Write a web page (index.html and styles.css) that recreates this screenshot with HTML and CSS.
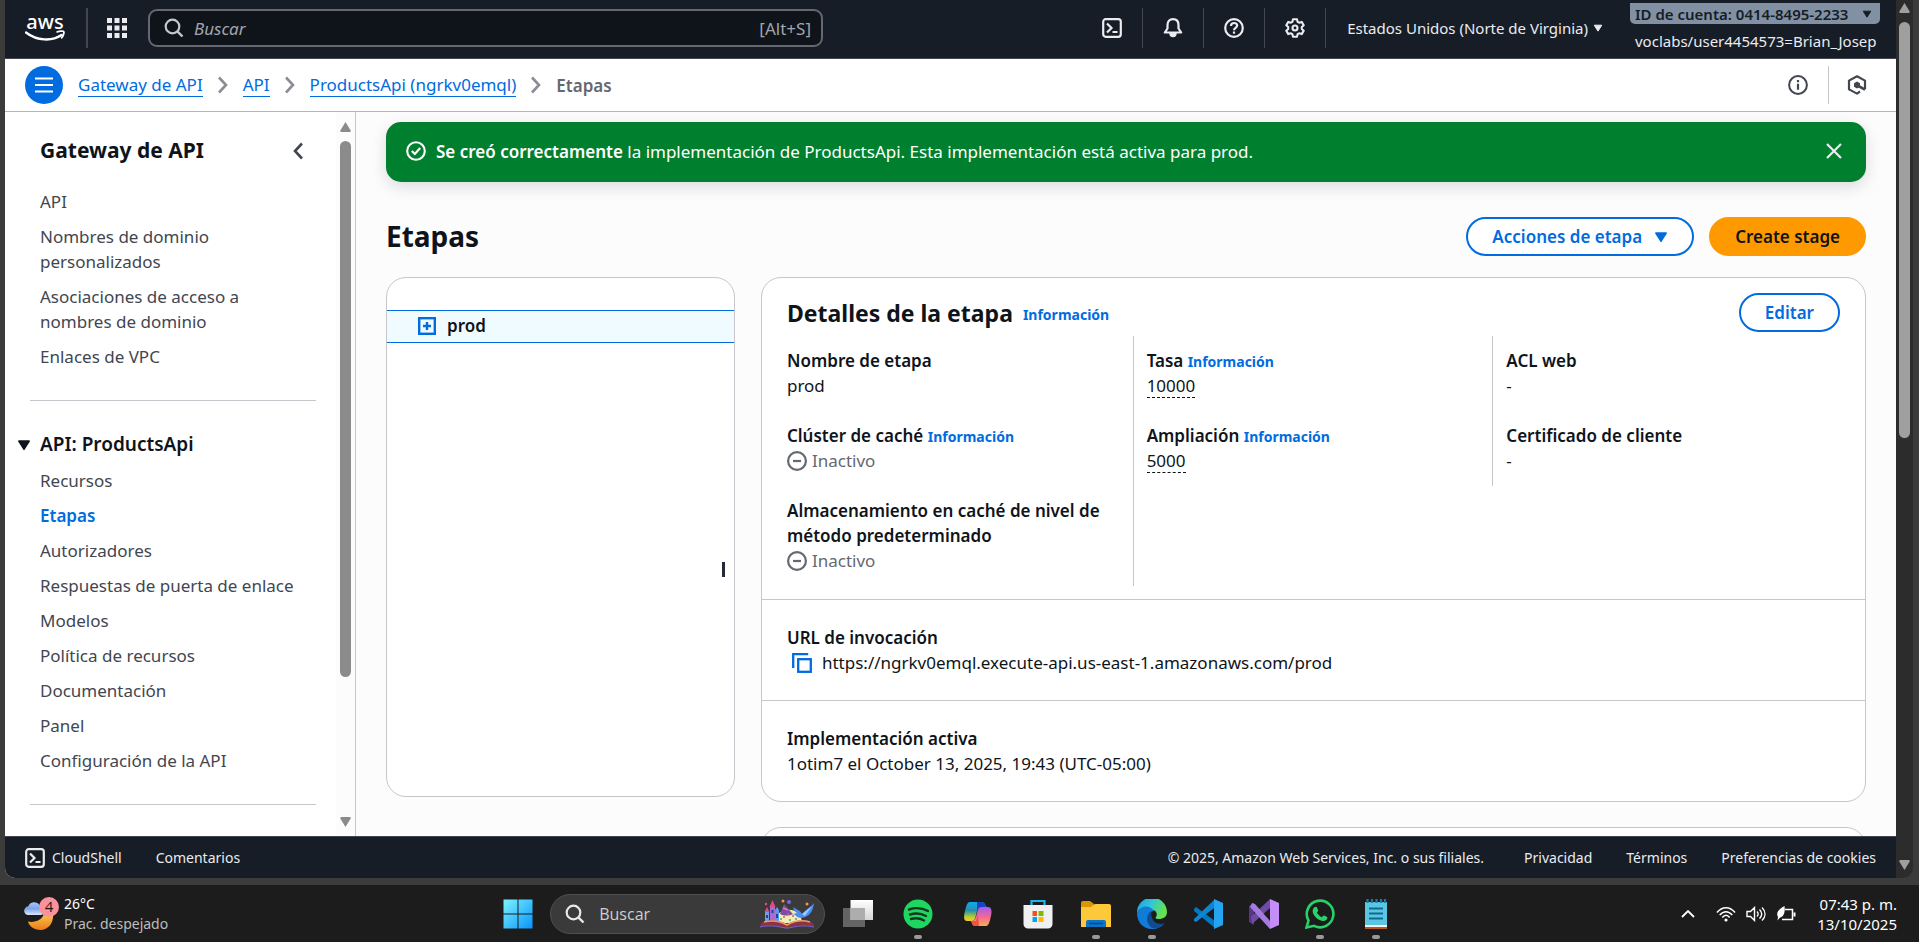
FILE: index.html
```html
<!DOCTYPE html>
<html lang="es">
<head>
<meta charset="utf-8">
<title>API Gateway - Etapas</title>
<meta name="viewport" content="width=device-width, initial-scale=1">
<link rel="stylesheet" href="styles.css">
</head>
<body>
<svg class="defs" aria-hidden="true">
  <symbol id="caret" viewBox="0 0 16 16"><path d="M2 3.5h12L8 13z" fill="currentColor" stroke="currentColor" stroke-width="1.6" stroke-linejoin="round"/></symbol>
  <symbol id="chev" viewBox="0 0 12 20"><path d="M2 2.5 9 10l-7 7.500" fill="none" stroke="currentColor" stroke-width="2.6"/></symbol>
  <symbol id="shell" viewBox="0 0 20 20"><rect x="1.200" y="1.200" width="17.600" height="17.600" rx="2.500" fill="none" stroke="currentColor" stroke-width="2.200"/><path d="M5 5.500 9.500 10 5 14.500M10.500 14h5" fill="none" stroke="currentColor" stroke-width="2.200"/></symbol>
  <symbol id="minus" viewBox="0 0 20 20"><circle cx="10" cy="10" r="8.900" fill="none" stroke="currentColor" stroke-width="2.200"/><path d="M6 10h8" stroke="currentColor" stroke-width="2.200"/></symbol>
  <symbol id="lens" viewBox="0 0 20 20"><circle cx="8.500" cy="8.500" r="6.800" fill="none" stroke="currentColor" stroke-width="2.200"/><path d="m13.300 13.300 5.200 5.200" stroke="currentColor" stroke-width="2.400"/></symbol>
</svg>
<div class="browser">
  <div class="page">
    <header class="topnav">
      <a class="aws" href="#" aria-label="aws"><svg viewBox="0 -9 40 46" width="40" height="46"><text x="20" y="15" text-anchor="middle" class="awstext">aws</text><path d="M1 18.500c11 8.500 26 9 35.500 2.500" fill="none" stroke="#fff" stroke-width="2.400" stroke-linecap="round"/><path d="M31.500 18.200c3-1.400 7-1.300 7.300-.6.400.8-.3 4.400-2.600 6.700" fill="none" stroke="#fff" stroke-width="1.800"/></svg></a>
      <span class="vbar"></span>
      <button class="grid9" aria-label="Servicios"><svg viewBox="0 0 20 20" width="20" height="20" fill="#ebebf0"><path d="M0 0h5v5H0zM7.500 0h5v5h-5zM15 0h5v5h-5zM0 7.500h5v5H0zM7.500 7.500h5v5h-5zM15 7.500h5v5h-5zM0 15h5v5H0zM7.500 15h5v5h-5zM15 15h5v5h-5z"/></svg></button>
      <label class="search"><svg width="20" height="20"><use href="#lens"/></svg><input type="text" placeholder="Buscar" aria-label="Buscar"><kbd>[Alt+S]</kbd></label>
      <div class="tools">
        <button aria-label="CloudShell"><svg width="20" height="20"><use href="#shell"/></svg></button>
        <button aria-label="Notificaciones"><svg viewBox="0 0 20 20" width="20" height="20" fill="none" stroke="currentColor" stroke-width="2.200"><path d="M10 1.200C6.500 1.200 4.500 3.600 4.500 7v3.500L1.800 14.500h16.400L15.500 10.500V7c0-3.400-2-5.800-5.500-5.800z" stroke-linejoin="round"/><path d="M7 15.500c0 4 6 4 6 0z" fill="currentColor" stroke-width="1.400"/></svg></button>
        <button aria-label="Ayuda"><svg viewBox="0 0 20 20" width="20" height="20" fill="none" stroke="currentColor" stroke-width="2.200"><circle cx="10" cy="10" r="8.800"/><path d="M7 8c0-4 6.200-3.800 6.200-.4 0 2.200-3.200 2.300-3.200 4.600"/><path d="M10 13.500v2.200"/></svg></button>
        <button aria-label="Configuración"><svg viewBox="0 0 20 20" width="20" height="20" fill="none" stroke="currentColor" stroke-width="2.100" stroke-linejoin="round"><path d="M8 1.200h4l.6 2.600 1.500.9 2.600-.8 2 3.400-1.900 1.800v1.800l1.900 1.800-2 3.400-2.600-.8-1.500.9-.6 2.600H8l-.6-2.600-1.500-.9-2.600.8-2-3.400 1.900-1.800V9.100L1.300 7.300l2-3.400 2.600.8 1.500-.9z"/><circle cx="10" cy="10" r="2.500"/></svg></button>
        <button class="region">Estados Unidos (Norte de Virginia)<svg width="10" height="10"><use href="#caret"/></svg></button>
        <div class="account">
          <button class="acctid">ID de cuenta: 0414-8495-2233<svg width="10" height="10"><use href="#caret"/></svg></button>
          <span>voclabs/user4454573=Brian_Josep</span>
        </div>
      </div>
    </header>
    <div class="crumbbar">
      <button class="burger" aria-label="Menú"><svg viewBox="0 0 18 16" width="18" height="16"><path d="M0 1.500h18M0 8h18M0 14.500h18" stroke="#fff" stroke-width="2.200"/></svg></button>
      <nav class="crumbs">
        <a href="#">Gateway de API</a><svg width="12" height="20"><use href="#chev"/></svg>
        <a href="#">API</a><svg width="12" height="20"><use href="#chev"/></svg>
        <a href="#">ProductsApi (ngrkv0emql)</a><svg width="12" height="20"><use href="#chev"/></svg>
        <strong>Etapas</strong>
      </nav>
      <div class="crumbtools">
        <button aria-label="Información"><svg viewBox="0 0 20 20" width="20" height="20" fill="none" stroke="currentColor" stroke-width="2"><circle cx="10" cy="10" r="8.900"/><path d="M10 8.800v6M10 5v2.200" stroke-width="2.200"/></svg></button>
        <button aria-label="Amazon Q"><svg viewBox="0 0 20 20" width="20" height="20" fill="none" stroke="currentColor" stroke-width="2.200"><path d="M13 16.500 10 18.600 2 14.400V5.600L10 1.300l8 4.300v8.600" stroke-linejoin="round"/><path d="M7 8.200 10 6.500l3 1.700v3.600l-3 1.700-3-1.700z" fill="currentColor" stroke="none"/><path d="m10.500 10.500 7.500 4.200" stroke-width="2.600"/></svg></button>
      </div>
    </div>
    <div class="workspace">
      <aside class="side">
        <div class="sidebody">
          <div class="sidehead"><h2>Gateway de API</h2><button aria-label="Cerrar"><svg class="flip" width="12" height="20"><use href="#chev"/></svg></button></div>
          <ul>
            <li><a href="#">API</a></li>
            <li><a href="#">Nombres de dominio personalizados</a></li>
            <li><a href="#">Asociaciones de acceso a nombres de dominio</a></li>
            <li><a href="#">Enlaces de VPC</a></li>
          </ul>
          <hr>
          <h3><svg width="14" height="14"><use href="#caret"/></svg>API: ProductsApi</h3>
          <ul>
            <li><a href="#">Recursos</a></li>
            <li><a class="on" href="#">Etapas</a></li>
            <li><a href="#">Autorizadores</a></li>
            <li><a href="#">Respuestas de puerta de enlace</a></li>
            <li><a href="#">Modelos</a></li>
            <li><a href="#">Política de recursos</a></li>
            <li><a href="#">Documentación</a></li>
            <li><a href="#">Panel</a></li>
            <li><a href="#">Configuración de la API</a></li>
          </ul>
          <hr>
        </div>
        <div class="scroll side-scroll"><i class="up"></i><i class="thumb"></i><i class="down"></i></div>
      </aside>
      <main class="main">
        <div class="flash" role="status">
          <svg viewBox="0 0 20 20" width="20" height="20" fill="none" stroke="#fff" stroke-width="2.100"><circle cx="10" cy="10" r="8.800"/><path d="m5.800 10 3 3 5.400-6"/></svg>
          <p><b>Se creó correctamente</b> la implementación de ProductsApi. Esta implementación está activa para prod.</p>
          <button aria-label="Cerrar"><svg viewBox="0 0 16 16" width="16" height="16"><path d="m1 1 14 14M15 1 1 15" stroke="#ebebf0" stroke-width="2.200"/></svg></button>
        </div>
        <div class="titlebar">
          <h1>Etapas</h1>
          <button class="btn">Acciones de etapa<svg width="14" height="14"><use href="#caret"/></svg></button>
          <button class="btn primary">Create stage</button>
        </div>
        <div class="columns">
          <section class="card tree">
            <div class="node"><button aria-label="Expandir"><svg viewBox="0 0 18 18" width="18" height="18" fill="none" stroke="#006ce0"><rect x="1.200" y="1.200" width="15.600" height="15.600" stroke-width="2.400"/><path d="M9 5v8M5 9h8" stroke-width="2.400"/></svg></button><b>prod</b></div>
            <i class="handle"></i>
          </section>
          <div class="stack">
            <section class="card details">
              <div class="cardhead"><h2>Detalles de la etapa</h2><a class="info" href="#">Información</a><button class="btn">Editar</button></div>
              <div class="kv">
                <dl>
                  <div><dt>Nombre de etapa</dt><dd>prod</dd></div>
                  <div><dt>Clúster de caché <a class="info" href="#">Información</a></dt><dd class="off"><svg width="20" height="20"><use href="#minus"/></svg>Inactivo</dd></div>
                  <div><dt>Almacenamiento en caché de nivel de método predeterminado</dt><dd class="off"><svg width="20" height="20"><use href="#minus"/></svg>Inactivo</dd></div>
                </dl>
                <dl>
                  <div><dt>Tasa <a class="info" href="#">Información</a></dt><dd><span class="hint">10000</span></dd></div>
                  <div><dt>Ampliación <a class="info" href="#">Información</a></dt><dd><span class="hint">5000</span></dd></div>
                </dl>
                <dl>
                  <div><dt>ACL web</dt><dd>-</dd></div>
                  <div><dt>Certificado de cliente</dt><dd>-</dd></div>
                </dl>
              </div>
              <dl class="strip"><dt>URL de invocación</dt><dd class="copy"><button aria-label="Copiar"><svg viewBox="0 0 20 20" width="20" height="20" fill="none" stroke="#006ce0" stroke-width="2.300"><path d="M1.200 15V1.200h15"/><rect x="6.200" y="6.200" width="12.600" height="12.600"/></svg></button>https://ngrkv0emql.execute-api.us-east-1.amazonaws.com/prod</dd></dl>
              <dl class="strip"><dt>Implementación activa</dt><dd>1otim7 el October 13, 2025, 19:43 (UTC-05:00)</dd></dl>
            </section>
            <section class="card next"></section>
          </div>
        </div>
      </main>
    </div>
    <footer class="foot">
      <a href="#"><svg width="20" height="20"><use href="#shell"/></svg>CloudShell</a>
      <a href="#">Comentarios</a>
      <span>© 2025, Amazon Web Services, Inc. o sus filiales.</span>
      <a href="#">Privacidad</a>
      <a href="#">Términos</a>
      <a href="#">Preferencias de cookies</a>
    </footer>
  </div>
  <div class="scroll page-scroll"><i class="up"></i><i class="thumb"></i><i class="down"></i></div>
</div>
<div class="taskbar">
  <button class="weather">
    <svg viewBox="0 0 36 36" width="36" height="36"><defs><linearGradient id="moon" x2="0" y2="1"><stop stop-color="#f8c64a"/><stop offset="1" stop-color="#ee7b18"/></linearGradient><linearGradient id="cloud" x2="0" y2="1"><stop stop-color="#a9c4f6"/><stop offset=".5" stop-color="#7fa3ea"/><stop offset="1" stop-color="#dce8fb"/></linearGradient></defs><path d="M29 18c1 9-5 16-12.500 16C10 34 5 30 4 25.500 11 27 18 24 20 18z" fill="url(#moon)"/><path d="M4.500 19a4.200 4.200 0 0 1-.3-8.400 6.500 6.500 0 0 1 11.500-1.500c3 0 5 2.500 5 5s-1.500 4.900-4 4.900z" fill="url(#cloud)"/><circle cx="25" cy="11" r="10" fill="#fb919b"/><text x="25" y="16" text-anchor="middle" class="badge">4</text></svg>
    <span>26°C<small>Prac. despejado</small></span>
  </button>
  <div class="apps">
    <button aria-label="Inicio" class="start"><svg viewBox="0 0 30 30" width="30" height="30"><defs><linearGradient id="win" x2="1" y2="1"><stop stop-color="#7df3fe"/><stop offset="1" stop-color="#0794fb"/></linearGradient></defs><path d="M.5.500h14v14H.5zM15.500.500h14v14h-14zM.5 15.500h14v14H.5zM15.500 15.500h14v14h-14z" fill="url(#win)"/></svg></button>
    <label class="pill"><svg width="20" height="20"><use href="#lens"/></svg><input type="text" placeholder="Buscar" aria-label="Buscar en Windows">
      <svg viewBox="0 0 56 30" width="56" height="30"><path d="M15 24C16 8 42 5 43 24z" fill="#f0edb5"/><path d="M6 23V13l2-3 2 3v10z" fill="#6fa0e6"/><path d="M11 23V7l2.500-4L16 7v16z" fill="#a86cd0"/><path d="M16 23V11l2-3 2 3v12z" fill="#5b97ec"/><path d="m5.500 13 2.500-5 2.500 5zM10.500 8l3-7 3 7z" fill="#df4b86"/><path d="M7 16h2v3H7zM12.500 11h2v3h-2zM17 15h2v4h-2z" fill="#27408f"/><path d="m21 15 4-10 7 8 2 2c-4 2-9 2-13 0z" fill="#7650a5"/><path d="m24 9 5 2" stroke="#ef72b0" stroke-width="1.500"/><path d="M34 8c4 3 7 3 9 7 4-5 8-6 12-11-1 9-5 14-13 15-4 0-5-3-8-4l4-1c-3-2-4-4-4-7z" fill="#4e8df0"/><path d="m43 15 10-8-7 10z" fill="#9bc8ff"/><path d="M2 24c8-4 18-3 26 1 8-4 18-5 26-1l1 4c-9-2-18-2-25 1h-4c-8-3-17-3-25-1z" fill="#8a3342"/><path d="M5 23c8-2 16-1 23 3 7-4 16-5 23-3" fill="none" stroke="#f39a70" stroke-width="1.500"/><path d="M1 28c9-2 17-1 25 1h4c8-2 16-3 25-1" fill="none" stroke="#7c60d2"/><g fill="#f79545"><circle cx="24" cy="2" r="1.500"/><circle cx="48" cy="5" r="1.500"/></g><circle cx="30" cy="3" r="2" fill="#7666e8"/><g fill="#e55078"><circle cx="7" cy="5" r="1.200"/><circle cx="25" cy="18" r="1"/><circle cx="34" cy="17" r="1"/><circle cx="29" cy="15" r="1"/></g><g fill="#49aa69"><circle cx="22" cy="20" r="1"/><circle cx="31" cy="21" r="1"/><circle cx="37" cy="20" r="1"/></g></svg></label>
    <button class="app wide" aria-label="Vista de tareas"><svg viewBox="0 0 30 30" width="30" height="30"><defs><linearGradient id="tv" x2="0" y2="1"><stop stop-color="#fff"/><stop offset="1" stop-color="#d5d5d5"/></linearGradient></defs><path d="M0 9h22v19H0z" fill="#646464"/><path d="M7.500 1H30v20H7.500z" fill="url(#tv)"/><path d="M7.500 9H22v12H7.500z" fill="#adadad"/></svg></button>
    <button class="app wide run" aria-label="Spotify"><svg viewBox="0 0 30 30" width="30" height="30"><circle cx="15" cy="15" r="14.500" fill="#1ed760"/><path d="M6 10.500c6-2 13.500-1.500 19 1.500M7 15.500c5-1.500 11.500-1 16 1.500M8 20c4.500-1.200 9-.8 13 1.500" fill="none" stroke="#16351f" stroke-width="2.400" stroke-linecap="round"/></svg></button>
    <button class="app wide" aria-label="Copilot"><svg viewBox="0 0 30 30" width="30" height="30"><defs><linearGradient id="cpa" x2="0" y2="1"><stop stop-color="#10a9f2"/><stop offset=".45" stop-color="#2591a9"/><stop offset=".8" stop-color="#bdd02f"/><stop offset="1" stop-color="#ffc929"/></linearGradient><linearGradient id="cpb" x2="0" y2="1"><stop stop-color="#a45cf0"/><stop offset=".5" stop-color="#ee6799"/><stop offset="1" stop-color="#ffac4d"/></linearGradient></defs><path d="M7 3h12c3 0 3 4 5 5h-6c-4 0-4 5-5 8-1 4-2 6-5 6H4c-4 0-3-6-2-10s2-9 5-9z" fill="url(#cpa)"/><path d="M14 3h5c3 0 3 5 5 6h-6c-2 0-3 1-4 4z" fill="#1643c9"/><path d="M23 27H12c-3 0-3-4-4-5 4 0 5-4 6-8 1-3 1-6 5-6h6c4 0 4 5 3 9s-2 10-5 10z" fill="url(#cpb)"/><path d="M8 22h5l2-6 1 11h-4c-3 0-3-4-4-5z" fill="#f4513b"/></svg></button>
    <button class="app wide" aria-label="Microsoft Store"><svg viewBox="0 0 30 30" width="30" height="30"><path d="M8.500 7V2h13v5" fill="none" stroke="#22b1ee" stroke-width="2.200"/><path d="M.5 6h29v19a4.500 4.500 0 0 1-4.500 4.500H5A4.500 4.500 0 0 1 .5 25z" fill="#f0f0f0"/><path d="M9.500 12H14v5H9.500z" fill="#f25022"/><path d="M15.500 12h5v5h-5z" fill="#7fba00"/><path d="M9.500 18H14v5H9.500z" fill="#00a4ef"/><path d="M15.500 18h5v5h-5z" fill="#ffb900"/></svg></button>
    <button class="app run" aria-label="Explorador"><svg viewBox="0 0 32 30" width="32" height="30"><path d="M1 4q0-2 2-2h7l4 3v4H1z" fill="#dc9700"/><path d="M1 8h10l4-3h14q2 0 2 2v21H1z" fill="#fdc93a"/><path d="M6 28v-5q0-2 2-2h16q2 0 2 2v5z" fill="#0b74c9"/><path d="M9 24.500h14" stroke="#064b89" stroke-width="1.500"/></svg></button>
    <button class="app run" aria-label="Edge"><svg viewBox="0 0 30 30" width="30" height="30"><defs><linearGradient id="ed" x2="1" y2=".4"><stop stop-color="#1b9de2"/><stop offset=".5" stop-color="#32c5d8"/><stop offset="1" stop-color="#66e34c"/></linearGradient></defs><path d="M0 14A15 15 0 0 1 30 13c0 5-4 7-8 7-3 0-4-1-3-2 2-3 0-7-4-7C8 8 2 9 0 14z" fill="url(#ed)"/><path d="M0 14c2-6 9-8 14-5 2 1 3 3 3 3-5 0-8 7-3 12 4 4 9 4 13 0-2 4-7 6-12 6C6 30 0 23 0 14z" fill="#0f7dd7"/><path d="M15 12c-6 2-7 12 0 17 5 1 10-1 12.500-5-4 2-10 1-12.500-5-1-3-1-5 0-7z" fill="#114b92"/></svg></button>
    <button class="app" aria-label="Visual Studio Code"><svg viewBox="0 0 30 30" width="30" height="30"><path d="m1 10 2-2 19 14v7L1 12z" fill="#0079c4"/><path d="M1 20 21 1v8L3 23l-2-1z" fill="#0a86d3"/><path d="m21 0 9 4v22l-9 4z" fill="#25a5f1"/></svg></button>
    <button class="app" aria-label="Visual Studio"><svg viewBox="0 0 30 30" width="30" height="30"><path d="m0 7 5-3v22l-5-3z" fill="#56358b"/><path d="M3 25 21 9V0L2 18z" fill="#704ba5"/><path d="m3 4 3 1 15 17v8L1 8z" fill="#a67be0"/><path d="m21 0 9 4v22l-9 4z" fill="#c58df8"/></svg></button>
    <button class="app run" aria-label="WhatsApp"><svg viewBox="0 0 30 30" width="30" height="30"><path d="M1.500 28.500 3.500 21.500A13.300 13.300 0 1 1 9 26.800z" fill="none" stroke="#25d366" stroke-width="2.600"/><path d="M9 8.500c1-1 2.500-1 3 0l1.200 2.800c.2.700-.8 1.700-1.300 2.200 1 2.200 3 3.800 5 4.700.8-.8 1.500-2 2.400-1.600l2.800 1.400c.8.500 0 2.300-.8 3-3 2.400-7.300.1-9.600-1.700-2.500-2.200-6-7.200-2.700-10.800z" fill="#25d366"/></svg></button>
    <button class="app run" aria-label="Bloc de notas"><svg viewBox="0 0 24 30" width="24" height="30"><path d="M1 27h22v3H1z" fill="#b4581b"/><path d="M1 25h22v3H1z" fill="#f1f1f1"/><path d="M1 3h22v23H1z" fill="#5cc5e2"/><path d="M5 9.500h14M5 14.500h14M5 19.500h14" stroke="#0f6a91" stroke-width="2"/><path d="M3.500 0v4M8 0v4M12.500 0v4M17 0v4M21 0v4" stroke="#187ca7" stroke-width="2.200"/></svg></button>
  </div>
  <div class="tray">
    <svg viewBox="0 0 14 8" width="14" height="8" fill="none" stroke="#fff" stroke-width="1.800"><path d="m1 7 6-6 6 6"/></svg>
    <span class="net">
    <svg viewBox="0 0 20 16" width="20" height="16" fill="none" stroke="#fff" stroke-width="1.500"><path d="M1 6.500c5-6.500 13-6.500 18 0M3.700 9c4-4.500 8.600-4.500 12.600 0M6.300 11.500c2.500-3 4.900-3 7.400 0"/><circle cx="10" cy="14" r="1.600" fill="#fff" stroke="none"/></svg>
    <svg viewBox="0 0 20 16" width="20" height="16" fill="none" stroke="#fff" stroke-width="1.400"><path d="M1 5.500h3.500L8.500 1.500v13l-4-4H1zM11 5.500c1.500 1.500 1.500 3.500 0 5M13.500 3.500c3 3 3 6 0 9M16 1.500c4 4 4 9 0 13"/></svg>
    <svg viewBox="0 0 20 16" width="20" height="16" fill="none" stroke="#fff" stroke-width="1.500"><path d="M9 3.500h7.500v10H6"/><path d="M17.500 6.500h2v4h-2z" fill="#fff" stroke="none"/><path d="M8.500 0c.8 6-.5 10.500-4.500 11.500L1.500 14.500 2 11C-.5 7 3 3 8.500 0z" fill="#fff" stroke="none"/></svg>
    </span>
    <span class="clock">07:43 p. m.<br>13/10/2025</span>
  </div>
</div>
</body>
</html>
```
FILE: styles.css
```css
* { box-sizing: border-box; }
body {
  margin: 0; height: 100vh; display: flex; flex-direction: column; overflow: hidden;
  background: #1c1c1c; color: #0f141a;
  font: 17px/25px "Noto Sans", "Open Sans", sans-serif;
}
button { border: 0; padding: 0; background: none; font: inherit; color: inherit; display: inline-flex; align-items: center; }
h1, h2, h3, p, ul, dl, dd { margin: 0; padding: 0; }
ul { list-style: none; }
a { color: inherit; text-decoration: none; }
svg { flex: none; display: block; }
b, strong, h3, dt { font-weight: 600; }
h1, h2 { font-weight: 700; }
.defs { display: none; }

.browser { flex: 1; min-height: 0; display: flex; padding: 0 6px 7px 5px; background: #3b3b3b; }
.page { flex: 1; min-width: 0; display: flex; flex-direction: column; background: #fff; border-bottom-left-radius: 10px; overflow: hidden; }

/* top navigation */
.topnav { height: 59px; flex: none; display: flex; align-items: center; padding: 0 16px 2px 20px; background: #161d26; border-bottom: 1px solid #424650; color: #ebebf0; }
.awstext { font: 500 20px "Noto Sans", sans-serif; fill: #fff; }
.vbar { width: 2px; height: 40px; margin: 0 19px 0 21px; background: #424650; }
.search { width: 675px; height: 38px; flex: 0 1 auto; margin-left: 21px; padding: 0 10px 0 14px; display: flex; align-items: center; gap: 8px; border: 2px solid #656871; border-radius: 9px; background: #0f141a; color: #c6c6cd; }
.search input { flex: 1; min-width: 0; border: 0; outline: 0; background: none; font: inherit; color: inherit; }
.search input::placeholder { color: #a4a4ad; font-style: italic; opacity: 1; }
kbd { font: inherit; color: #a4a4ad; }
.tools { margin-left: auto; display: flex; align-items: center; font-size: 15px; }
.tools > button { height: 40px; padding: 0 20px; border-right: 1px solid #424650; white-space: nowrap; }
.tools > .region { border: 0; gap: 5px; padding: 0 27px 0 21px; }
.account { align-self: flex-start; width: 250px; display: flex; flex-direction: column; gap: 5px; white-space: nowrap; }
.account span { padding-left: 5px; line-height: 24px; }
.acctid { height: 21px; padding: 0 8px 0 5px; justify-content: space-between; background: #8290a3; color: #161d26; font-weight: 600; line-height: 20px; border-radius: 0 0 5px 5px; }

/* breadcrumb bar */
.crumbbar { height: 53px; flex: none; display: flex; align-items: center; padding: 0 29px 0 20px; border-bottom: 1px solid #b4b4bb; color: #424650; }
.burger { width: 38px; height: 38px; justify-content: center; border-radius: 50%; background: #006ce0; }
.crumbs { display: flex; align-items: center; gap: 14px; margin-left: 15px; color: #8c8c94; }
.crumbs a { color: #006ce0; line-height: 23px; border-bottom: 1px solid #006ce0; }
.crumbs strong { color: #656871; }
.crumbtools { margin-left: auto; display: flex; align-items: center; }
.crumbtools button { height: 38px; padding-left: 18px; }
.crumbtools button:first-child { padding-right: 20px; border-right: 1px solid #c6c6cd; }

.workspace { flex: 1; min-height: 0; display: flex; background: #fcfcfd; }

/* side navigation */
.side { width: 351px; flex: none; display: flex; background: #fff; border-right: 1px solid #c6c6cd; overflow: hidden; }
.sidebody { flex: 1; padding: 26px 20px 0 35px; color: #424650; }
.sidehead { display: flex; align-items: center; justify-content: space-between; margin-bottom: 26px; padding-right: 12px; }
.sidehead h2 { color: #0f141a; font-size: 21px; line-height: 25px; }
.flip { transform: scaleX(-1); }
.side ul { padding-right: 20px; }
.side li { padding-bottom: 10px; }
.side li:last-child { padding-bottom: 0; }
.side .on { color: #006ce0; font-weight: 600; }
.side hr { height: 1px; margin: 31px 0 30px -10px; border: 0; background: #c6c6cd; }
.side h3 { display: flex; align-items: center; gap: 9px; margin: 0 0 10px -23px; font-size: 19px; line-height: 27px; color: #0f141a; }

.scroll { flex: none; display: flex; flex-direction: column; align-items: center; color: #8b8b8b; }
.scroll i { display: block; width: 11px; }
.scroll .up { height: 10px; background: currentColor; clip-path: polygon(50% 0, 100% 90%, 90% 100%, 10% 100%, 0 90%); }
.scroll .down { height: 10px; margin-top: auto; background: currentColor; clip-path: polygon(50% 100%, 100% 10%, 90% 0, 10% 0, 0 10%); }
.scroll .thumb { background: currentColor; border-radius: 6px; margin-top: 9px; }
.side-scroll { width: 19px; padding: 10px 0 9px; background: #fcfcfc; }
.side-scroll .thumb { height: 76%; }
.page-scroll { width: 17px; padding: 3px 0 8px; background: #2c2c2c; color: #9f9f9f; border-bottom-right-radius: 10px; }
.page-scroll .thumb { height: 48%; }

/* content */
.main { flex: 1; min-width: 0; padding: 10px 30px 0; overflow: hidden; }
.flash { height: 60px; display: flex; align-items: center; gap: 10px; padding: 0 24px 2px 20px; background: #00802f; color: #fff; border-radius: 15px; box-shadow: 0 5px 15px rgba(15, 20, 26, .14); }
.flash button { margin-left: auto; }
.titlebar { display: flex; align-items: center; gap: 15px; margin: 35px 0 21px; }
.titlebar h1 { margin-right: auto; font-size: 28px; line-height: 39px; }
.btn { height: 39px; padding: 0 24px; gap: 12px; border: 2px solid #006ce0; border-radius: 20px; background: #fff; color: #006ce0; font-weight: 600; }
.primary { border-color: #ff9900; background: #ff9900; color: #0f141a; }
.columns { display: grid; grid-template-columns: 6fr 19fr; gap: 26px; align-items: start; }
.card { border: 1px solid #c6c6cd; border-radius: 20px; background: #fff; }
.tree { height: 520px; padding-top: 32px; display: flex; flex-direction: column; }
.node { height: 33px; display: flex; align-items: center; gap: 11px; padding: 0 0 2px 31px; background: #f0fbff; border: solid #006ce0; border-width: 1px 0; }
.handle { width: 3px; height: 15px; margin: auto 9px 219px auto; background: #232b37; }
.stack { display: grid; gap: 25px; }
.cardhead { display: flex; align-items: center; padding: 15px 25px 4px; }
.cardhead h2 { font-size: 23px; line-height: 30px; }
.cardhead .info { margin: 5px 0 0 10px; }
.cardhead .btn { margin-left: auto; }
.info { color: #006ce0; font-size: 14px; line-height: 20px; font-weight: 700; }
.kv { display: grid; grid-template-columns: repeat(3, 1fr); align-items: start; padding: 0 12px 13px; }
.kv dl { display: grid; gap: 25px; padding: 12px 12px 13px 13px; }
.kv dl:not(:last-child) { border-right: 1px solid #c6c6cd; }
.off { display: flex; align-items: center; gap: 5px; color: #656871; }
.hint { border-bottom: 1px dashed #0f141a; }
.strip { padding: 25px; border-top: 1px solid #c6c6cd; }
.copy { display: flex; align-items: center; gap: 10px; padding-left: 5px; }
.next { height: 60px; }

/* console footer */
.foot { height: 42px; flex: none; display: flex; align-items: center; gap: 34px; padding: 0 20px; background: #161d26; border-top: 1px solid #424650; color: #ebebf0; font-size: 14px; white-space: nowrap; }
.foot a { display: flex; align-items: center; gap: 7px; }
.foot span { margin: 0 6px 0 auto; }

/* taskbar */
.taskbar { height: 57px; flex: none; display: flex; align-items: center; padding-right: 22px; background: #1c1c1c; color: #fff; font-size: 15px; line-height: 20px; }
.weather { width: 26%; padding-left: 24px; gap: 4px; text-align: left; font-size: 14px; }
.weather small { display: block; font-size: 14px; color: #bdbdbd; }
.badge { font: 15px "Open Sans", sans-serif; fill: #1c1c1c; }
.apps { display: flex; align-items: center; }
.start { padding: 0 17px 0 10px; }
.pill { width: 275px; height: 40px; display: flex; align-items: center; gap: 12px; margin-right: 3px; padding: 0 9px 0 14px; border: 1px solid #505050; border-radius: 20px; background: #3a3a3a; color: #e8e8e8; }
.pill input { flex: 1; min-width: 0; border: 0; outline: 0; background: none; font: 16px "Open Sans", sans-serif; }
.pill input::placeholder { color: #cfcfcf; opacity: 1; }
.app { position: relative; width: 56px; height: 56px; justify-content: center; }
.wide { width: 60px; }
.run::after { content: ""; position: absolute; bottom: 3px; left: 50%; margin-left: -4px; width: 8px; height: 4px; border-radius: 2px; background: #9a9a9a; }
.tray { margin-left: auto; display: flex; align-items: center; gap: 21px; text-align: right; }
.net { display: flex; gap: 10px; }
.clock { min-width: 74px; }
```
